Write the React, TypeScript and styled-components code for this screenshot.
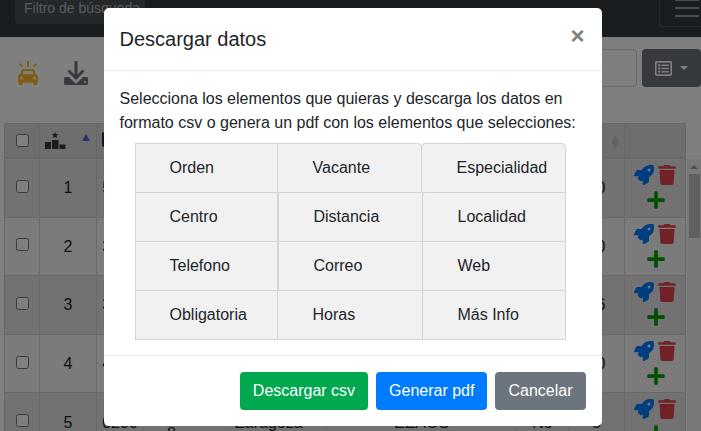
import React from 'react';
import styled, { createGlobalStyle } from 'styled-components';
import { FaPlus, FaRegListAlt, FaRocket, FaTrash } from 'react-icons/fa';

const GlobalStyle = createGlobalStyle`
  html, body {
    margin: 0;
    height: 100%;
    overflow: hidden;
    background: #fff;
    color: #212529;
    font-family: "Liberation Sans", Arial, sans-serif;
    font-size: 16px;
    line-height: 1.5;
  }
  * { box-sizing: border-box; }
`;

const Page = styled.div`
  width: 701px;
  height: 431px;
  overflow: hidden;
`;

const Navbar = styled.nav`
  height: 37px;
  background: #343a40;
  display: flex;
  justify-content: space-between;
  padding: 0 0 0 15px;
`;

const SearchBox = styled.div`
  width: 130px;
  height: 24px;
  background: #495057;
  border-radius: 0 0 4px 4px;
  color: #adb5bd;
  font-size: 14px;
  line-height: 16px;
  padding-left: 9px;
  white-space: nowrap;
`;

const Toggler = styled.div`
  width: 50px;
  height: 27px;
  margin-right: -8px;
  border: 1px solid #4a5056;
  border-top: 0;
  border-radius: 0 0 4px 4px;
  padding: 0 0 0 15px;
  display: flex;
  flex-direction: column;
  gap: 6px;
`;

const TogglerBar = styled.span`
  display: block;
  width: 24px;
  height: 2px;
  background: #9a9da0;
  &:first-child { margin-top: -1px; }
`;

const Toolbar = styled.div`
  height: 86px;
  display: flex;
  align-items: flex-start;
  padding: 12px 0 0 18px;
`;

const ToolIcon = styled.div<{ $color: string; $width: number }>`
  width: ${p => p.$width}px;
  height: 36px;
  display: flex;
  align-items: flex-end;
  color: ${p => p.$color};
`;

const ToolRight = styled.div`
  margin-left: auto;
  display: flex;
  gap: 5px;
`;

const SearchInput = styled.div`
  width: 100px;
  height: 38px;
  border: 1px solid #ced4da;
  border-radius: 4px;
`;

const ColumnsButton = styled.div`
  width: 59px;
  height: 38px;
  background: #6c757d;
  border-radius: 4px;
  display: flex;
  align-items: center;
  padding-left: 13px;
  gap: 8px;
  color: #fff;
`;

const Caret = styled.span`
  width: 0;
  height: 0;
  border-left: 4px solid transparent;
  border-right: 4px solid transparent;
  border-top: 4px solid #fff;
`;

const TableWrap = styled.div`
  display: flex;
  padding-left: 4px;
`;

const Rows = styled.div`
  flex: none;
  width: 683px;
`;

const TableRow = styled.div`
  display: grid;
  grid-template-columns: 36px 57px 47px 86px 97px 190px 52px 56px 61px;
`;

const HeadCell = styled.div<{ $align?: string }>`
  height: 36px;
  background: #dcdcdc;
  border: 1px solid #d0d0d0;
  border-width: 1px 1px 2px 0;
  display: flex;
  align-items: center;
  justify-content: ${p => p.$align || 'center'};
  &:first-child { border-left-width: 1px; }
`;

const OrderHead = styled(HeadCell)`
  padding-left: 5px;
  gap: 16px;
`;

const SortUp = styled.span<{ $color: string }>`
  display: block;
  width: 0;
  height: 0;
  border-left: 4.500px solid transparent;
  border-right: 4.500px solid transparent;
  border-bottom: 7px solid ${p => p.$color};
`;

const SortDown = styled.span<{ $color: string }>`
  display: block;
  width: 0;
  height: 0;
  border-left: 4.500px solid transparent;
  border-right: 4.500px solid transparent;
  border-top: 7px solid ${p => p.$color};
`;

const SortPair = styled.div`
  display: flex;
  flex-direction: column;
  margin-right: 5px;
  margin-bottom: -2px;
`;

const OrderSort = styled.div`
  display: flex;
  margin-bottom: 7px;
`;

const CodeIcon = styled.span`
  width: 16px;
  height: 15px;
  margin-left: 5px;
  margin-bottom: 2px;
  border: 2px solid #17305e;
  border-radius: 2px;
`;

const Cell = styled.div<{ $odd: boolean }>`
  height: 58.600px;
  padding-top: 1px;
  background: ${p => (p.$odd ? '#e4e4e4' : '#f6f6f6')};
  border-right: 1px solid #d0d0d0;
  border-bottom: 1px solid #d0d0d0;
  display: flex;
  align-items: center;
  justify-content: center;
  white-space: nowrap;
  &:first-child { border-left: 1px solid #d0d0d0; }
`;

const CityCell = styled(Cell)`
  justify-content: flex-start;
  padding-left: 5px;
`;

const LowCell = styled(Cell)`
  justify-content: flex-start;
  padding: 24px 0 0 23px;
`;

const ActionCell = styled(Cell)`
  flex-direction: column;
  justify-content: flex-start;
  padding: 6px 0 0 1px;
  gap: 5px;
`;

const ActionRow = styled.div`
  display: flex;
  gap: 3px;
  font-size: 20px;
  line-height: 0;
`;

const Box = styled.input.attrs({ type: 'checkbox' })`
  width: 13px;
  height: 13px;
  margin: 0;
`;

const RowBox = styled(Box)`
  margin-bottom: 4px;
`;

const Scrollbar = styled.div`
  flex: none;
  width: 14px;
  height: 272px;
  margin-top: 36px;
  background: #f1f1f1;
  display: flex;
  flex-direction: column;
  align-items: center;
`;

const ScrollArrow = styled.div`
  margin: 6px 0 5px;
  width: 0;
  height: 0;
  border-left: 4px solid transparent;
  border-right: 4px solid transparent;
  border-bottom: 4px solid #a3a3a3;
`;

const ScrollThumb = styled.div`
  width: 11px;
  height: 64px;
  background: #c1c1c1;
`;

const Backdrop = styled.div`
  position: fixed;
  inset: 0;
  background: rgba(0, 0, 0, 0.5);
`;

const Modal = styled.div`
  position: fixed;
  left: 103.500px;
  top: 8px;
  width: 498px;
  height: 418px;
  background: #fff;
  border-radius: 5px;
`;

const ModalHeader = styled.div`
  display: flex;
  justify-content: space-between;
  padding: 16px;
  border-bottom: 1px solid #e9ecef;
`;

const ModalTitle = styled.h5`
  margin: 0;
  font-size: 20px;
  font-weight: 400;
  line-height: 30px;
`;

const Close = styled.span`
  font-size: 24px;
  font-weight: 700;
  line-height: 24px;
  color: #7f7f7f;
  margin-right: 1px;
`;

const ModalBody = styled.div`
  padding: 16px;
  height: 284px;
`;

const Intro = styled.p`
  margin: 0 0 8px;
`;

const FieldGrid = styled.div`
  margin-left: 15px;
  padding-top: 1px;
  width: 431px;
`;

const FieldRow = styled.div`
  display: flex;
`;

const Field = styled.div<{ $width: number; $pad: number; $corner?: string; $flush?: boolean }>`
  flex: none;
  width: ${p => p.$width}px;
  height: 50px;
  padding-left: ${p => p.$pad}px;
  display: flex;
  align-items: center;
  background: #f1f1f1;
  border: 1px solid #d4d4d4;
  margin: -1px 0 0 ${p => (p.$flush ? '0' : '-1px')};
  border-radius: ${p => p.$corner || '0'};
  &:first-child { margin-left: 0; }
`;

const ModalFooter = styled.div`
  display: flex;
  justify-content: flex-end;
  gap: 8px;
  padding: 16px;
  border-top: 1px solid #e9ecef;
`;

const Button = styled.button<{ $bg: string }>`
  height: 38px;
  padding: 0 13px;
  border: 0;
  border-radius: 4px;
  background: ${p => p.$bg};
  color: #fff;
  font: inherit;
`;

const CarIcon = () => (
  <svg width="20" height="24" viewBox="0 0 20 24" fill="currentColor">
    <path d="M9 0h2v6H9zM1.600 2.200l3.600 2.400-1 1.500L.6 3.700zM18.400 2.200l-3.600 2.400 1 1.500 3.600-2.400z" />
    <path fillRule="evenodd" d="M5 8h10a1.500 1.500 0 0 1 1.400 1l1.500 4.200A3 3 0 0 1 20 16v5.500h-1V24h-3.500v-2.500h-11V24H1v-2.500H0V16a3 3 0 0 1 2.100-2.800L3.600 9A1.500 1.500 0 0 1 5 8zm.6 2-1 3.200h10.800l-1-3.200zM3.500 15.500a1.500 1.500 0 1 0 0 3 1.500 1.500 0 0 0 0-3zm13 0a1.500 1.500 0 1 0 0 3 1.500 1.500 0 0 0 0-3z" />
  </svg>
);

const DownloadIcon = () => (
  <svg width="24" height="24" viewBox="0 0 24 24" fill="currentColor">
    <path d="M10.500 0h3v13.500l5-5 2 2L12 19 3.500 10.500l2-2 5 5z" />
    <path fillRule="evenodd" d="M1.500 16H5l7 7 7-7h3.500A1.500 1.500 0 0 1 24 17.500v5a1.500 1.500 0 0 1-1.500 1.500h-21A1.500 1.500 0 0 1 0 22.500v-5A1.500 1.500 0 0 1 1.500 16zm19.500 4a1 1 0 1 0 0 2 1 1 0 0 0 0-2z" />
  </svg>
);

const PodiumIcon = () => (
  <svg width="21" height="17" viewBox="0 0 21 17" fill="#343a40">
    <path d="M0 10h6v7H0zM7 8h6.500v9H7zM14.500 12.500H20.500V17h-6z" />
    <path d="M10 0l1 2 2.200.300-1.600 1.500.4 2.200-2-1-2 1 .4-2.200L6.800 2.300 9 2z" />
  </svg>
);

const fieldRows = [
  [
    { label: 'Orden', width: 143, pad: 34 },
    { label: 'Vacante', width: 145, pad: 35, corner: '0 4px 0 0' },
    { label: 'Especialidad', width: 145, pad: 35, corner: '4px 4px 0 0' },
  ],
  [
    { label: 'Centro', width: 143, pad: 34 },
    { label: 'Distancia', width: 145, pad: 35, flush: true },
    { label: 'Localidad', width: 144, pad: 35, corner: '4px 0 0 0' },
  ],
  [
    { label: 'Telefono', width: 143, pad: 34 },
    { label: 'Correo', width: 145, pad: 35, flush: true },
    { label: 'Web', width: 144, pad: 35 },
  ],
  [
    { label: 'Obligatoria', width: 143, pad: 34 },
    { label: 'Horas', width: 146, pad: 35 },
    { label: 'Más Info', width: 144, pad: 35 },
  ],
];

const tableRows = [
  { order: 1, code: '5200', end: '10' },
  { order: 2, code: '3200', end: '20' },
  { order: 3, code: '3200', end: '16' },
  { order: 4, code: '4200', end: '20' },
  { order: 5, code: '0200', place: '8', city: 'Zaragoza', type: 'EEAOS', flag: 'No', end: '3' },
];

const App: React.FC = () => {
  return (
    <Page>
      <GlobalStyle />
      <Navbar>
        <SearchBox>Filtro de búsqueda</SearchBox>
        <Toggler>
          <TogglerBar />
          <TogglerBar />
          <TogglerBar />
        </Toggler>
      </Navbar>
      <Toolbar>
        <ToolIcon $color="#ffb91f" $width={46}><CarIcon /></ToolIcon>
        <ToolIcon $color="#6c757d" $width={24}><DownloadIcon /></ToolIcon>
        <ToolRight>
          <SearchInput />
          <ColumnsButton><FaRegListAlt size={17} /><Caret /></ColumnsButton>
        </ToolRight>
      </Toolbar>
      <TableWrap>
        <Rows>
          <TableRow>
            <HeadCell><Box /></HeadCell>
            <OrderHead $align="flex-start">
              <PodiumIcon />
              <OrderSort><SortUp $color="#5a68d0" /></OrderSort>
            </OrderHead>
            <HeadCell $align="flex-start"><CodeIcon /></HeadCell>
            <HeadCell />
            <HeadCell />
            <HeadCell />
            <HeadCell />
            <HeadCell $align="flex-end">
              <SortPair>
                <SortUp $color="#c4c4c4" />
                <SortDown $color="#c4c4c4" />
              </SortPair>
            </HeadCell>
            <HeadCell />
          </TableRow>
          {tableRows.map((row, i) => {
            const odd = i % 2 === 0;
            return (
              <TableRow key={row.order}>
                <Cell $odd={odd}><RowBox /></Cell>
                <Cell $odd={odd}>{row.order}</Cell>
                <Cell $odd={odd}>{row.code}</Cell>
                <LowCell $odd={odd}>{row.place}</LowCell>
                <CityCell $odd={odd}>{row.city}</CityCell>
                <Cell $odd={odd}>{row.type}</Cell>
                <Cell $odd={odd}>{row.flag}</Cell>
                <Cell $odd={odd}>{row.end}</Cell>
                <ActionCell $odd={odd}>
                  <ActionRow>
                    <FaRocket color="#007bff" />
                    <FaTrash color="#e0444f" />
                  </ActionRow>
                  <ActionRow><FaPlus color="#00a000" /></ActionRow>
                </ActionCell>
              </TableRow>
            );
          })}
        </Rows>
        <Scrollbar>
          <ScrollArrow />
          <ScrollThumb />
        </Scrollbar>
      </TableWrap>
      <Backdrop />
      <Modal>
        <ModalHeader>
          <ModalTitle>Descargar datos</ModalTitle>
          <Close>×</Close>
        </ModalHeader>
        <ModalBody>
          <Intro>
            Selecciona los elementos que quieras y descarga los datos en formato csv o genera un pdf con los elementos que selecciones:
          </Intro>
          <FieldGrid>
            {fieldRows.map(cells => (
              <FieldRow key={cells[0].label}>
                {cells.map(cell => (
                  <Field key={cell.label} $width={cell.width} $pad={cell.pad} $corner={cell.corner} $flush={cell.flush}>
                    {cell.label}
                  </Field>
                ))}
              </FieldRow>
            ))}
          </FieldGrid>
        </ModalBody>
        <ModalFooter>
          <Button $bg="#00a84f">Descargar csv</Button>
          <Button $bg="#007bff">Generar pdf</Button>
          <Button $bg="#6c757d">Cancelar</Button>
        </ModalFooter>
      </Modal>
    </Page>
  );
};

export default App;
